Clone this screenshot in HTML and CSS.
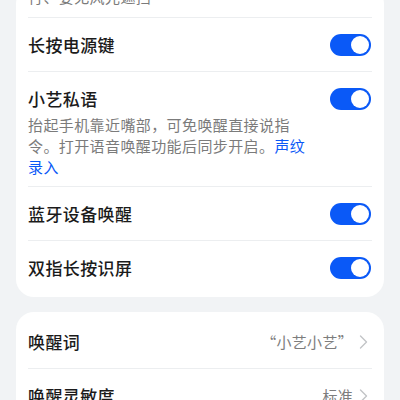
FILE: index.html
```html
<!DOCTYPE html>
<html lang="zh-CN">
<head>
<meta charset="utf-8">
<title>唤醒设置</title>
<link rel="stylesheet" href="styles.css">
</head>
<body>
<div class="page">
  <section class="card card-first">
    <div class="row row-partial">
      <p class="desc">行、要无风光遮挡</p>
    </div>
    <div class="row">
      <span class="title">长按电源键</span>
      <span class="toggle"><span class="knob"></span></span>
    </div>
    <div class="row row-tall">
      <div class="text">
        <span class="title">小艺私语</span>
        <p class="desc">抬起手机靠近嘴部，可免唤醒直接说指令。打开语音唤醒功能后同步开启。<span class="link">声纹录入</span></p>
      </div>
      <span class="toggle"><span class="knob"></span></span>
    </div>
    <div class="row">
      <span class="title">蓝牙设备唤醒</span>
      <span class="toggle"><span class="knob"></span></span>
    </div>
    <div class="row">
      <span class="title">双指长按识屏</span>
      <span class="toggle"><span class="knob"></span></span>
    </div>
  </section>
  <section class="card card-second">
    <div class="row row-first">
      <span class="title">唤醒词</span>
      <span class="value">“小艺小艺”<svg class="chev" width="16" height="24" viewBox="0 0 16 24"><polyline points="4.5,6 10.5,12 4.5,18" fill="none" stroke="#c2c4c7" stroke-width="1.4" stroke-linecap="round" stroke-linejoin="round"/></svg></span>
    </div>
    <div class="row">
      <span class="title">唤醒灵敏度</span>
      <span class="value">标准<svg class="chev" width="16" height="24" viewBox="0 0 16 24"><polyline points="4.5,6 10.5,12 4.5,18" fill="none" stroke="#c2c4c7" stroke-width="1.4" stroke-linecap="round" stroke-linejoin="round"/></svg></span>
    </div>
  </section>
</div>
</body>
</html>
```

FILE: styles.css
```css
html, body {
  margin: 0;
  padding: 0;
  background: #f1f3f5;
  font-family: "Noto Sans CJK SC", "Noto Sans", sans-serif;
  overflow: hidden;
}

.page {
  display: flex;
  flex-direction: column;
  gap: 15px;
  padding: 0 16px;
}

.card {
  background: #ffffff;
  border-radius: 18px;
  padding: 0 12px;
}

.card-first {
  margin-top: -14px;
  padding-bottom: 3px;
}

.card-second {
  padding-top: 3px;
}

.row {
  display: flex;
  align-items: center;
  justify-content: space-between;
  min-height: 53px;
  border-top: 1px solid #eceef0;
}

.row-partial,
.row-first {
  border-top: none;
}

.row-first {
  min-height: 53px;
}

.row-partial {
  min-height: 0;
  padding-bottom: 10px;
}

.row-tall {
  align-items: flex-start;
  padding: 16px 0 9px;
}

.text {
  flex: 1;
  display: flex;
  flex-direction: column;
  padding-right: 16px;
}

.title {
  font-size: 17px;
  line-height: 22px;
  letter-spacing: 0.4px;
  font-weight: 500;
  color: #1b1b1b;
}

.desc {
  margin: 0;
  font-size: 15px;
  line-height: 21px;
  letter-spacing: 0.4px;
  color: #7b7b7b;
}

.row-tall .desc {
  margin-top: 4px;
}

.link {
  color: #0a59f7;
}

.toggle {
  flex: none;
  display: flex;
  align-items: center;
  justify-content: flex-end;
  box-sizing: border-box;
  width: 41px;
  height: 22px;
  margin-right: 1px;
  padding: 2px;
  border-radius: 11px;
  background: #0a59f7;
}

.knob {
  width: 18px;
  height: 18px;
  border-radius: 50%;
  background: #ffffff;
}

.value {
  display: flex;
  align-items: center;
  font-size: 15px;
  letter-spacing: 0.3px;
  color: #7d7d7d;
}

.chev {
  display: block;
  margin-left: 3px;
}
```
